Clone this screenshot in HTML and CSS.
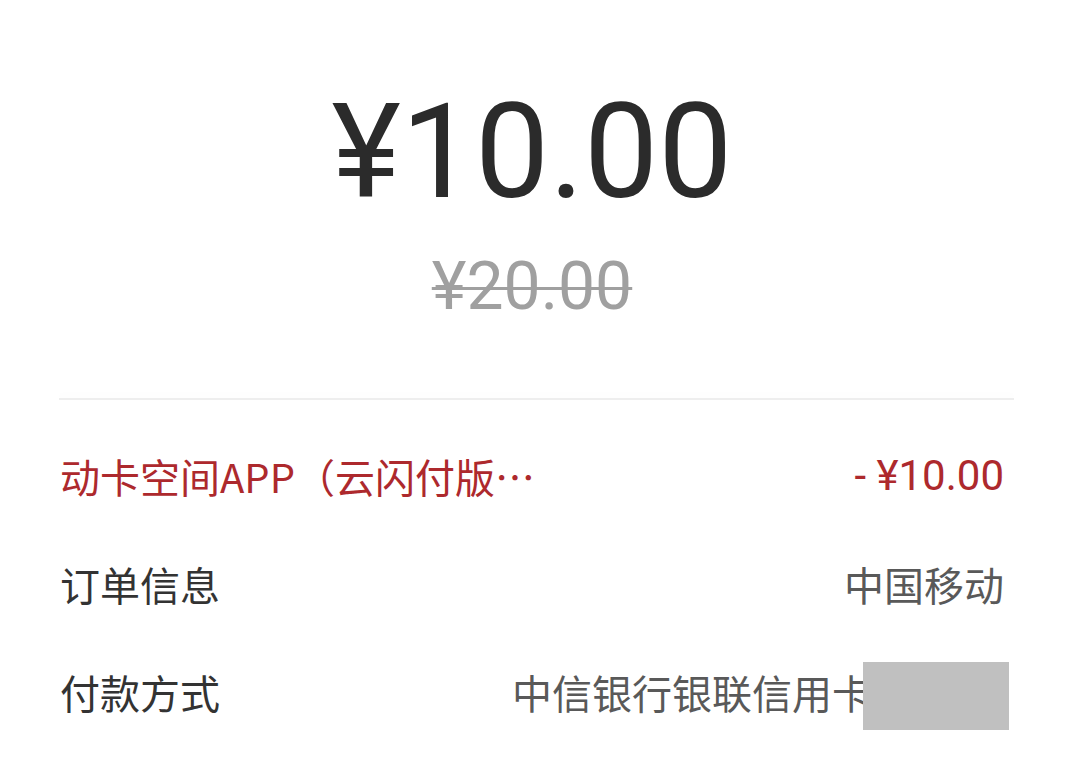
FILE: index.html
```html
<!DOCTYPE html>
<html lang="zh-CN">
<head>
    <meta charset="UTF-8">
    <meta name="viewport" content="width=device-width, initial-scale=1.0">
    <title>订单详情</title>
    <link rel="stylesheet" href="styles.css">
</head>
<body>
    <div class="page">
        <div class="amount">¥10.00</div>
        <div class="original">¥20.00</div>
        <div class="divider"></div>

        <div class="row first">
            <span class="merchant">动卡空间APP（云闪付版⋯</span>
            <span class="pay">- ¥10.00</span>
        </div>
        <div class="row">
            <span class="label">订单信息</span>
            <span class="value">中国移动</span>
        </div>
        <div class="row">
            <span class="label">付款方式</span>
            <span class="value card">
                <span>中信银行银联信用卡</span>
                <span class="mask"></span>
            </span>
        </div>
    </div>
</body>
</html>
```

FILE: styles.css
```css
body {
    margin: 0;
    padding: 0;
    background-color: #ffffff;
    font-family: "Noto Sans CJK SC", sans-serif;
}
.page {
    padding: 86px 76px 0 60px;
}
.amount {
    font-family: Roboto, "Noto Sans CJK SC", sans-serif;
    font-size: 132px;
    line-height: 1;
    color: #2b2b2b;
    text-align: center;
}
.original {
    margin-top: 36px;
    font-family: Roboto, "Noto Sans CJK SC", sans-serif;
    font-size: 66px;
    line-height: 1;
    color: #a0a0a0;
    text-align: center;
    text-decoration: line-through;
    text-decoration-thickness: 3px;
}
.divider {
    margin: 78px -10px 0 -1px;
    height: 2px;
    background-color: #eeeeee;
    box-shadow: 0 -3px 6px #f8f8f8;
}
.row {
    display: flex;
    justify-content: space-between;
    align-items: center;
    height: 108px;
    font-size: 40px;
    line-height: 1;
}
.row.first {
    margin-top: 22px;
}
.merchant {
    color: #ad292d;
}
.pay {
    font-family: Roboto, "Noto Sans CJK SC", sans-serif;
    font-size: 42px;
    color: #ad292d;
}
.label {
    color: #333333;
}
.value {
    color: #595959;
}
.card {
    display: flex;
    align-items: center;
}
.mask {
    width: 146px;
    height: 68px;
    margin: 8px -5px 0 -9px;
    background-color: #c0c0c0;
}
```
